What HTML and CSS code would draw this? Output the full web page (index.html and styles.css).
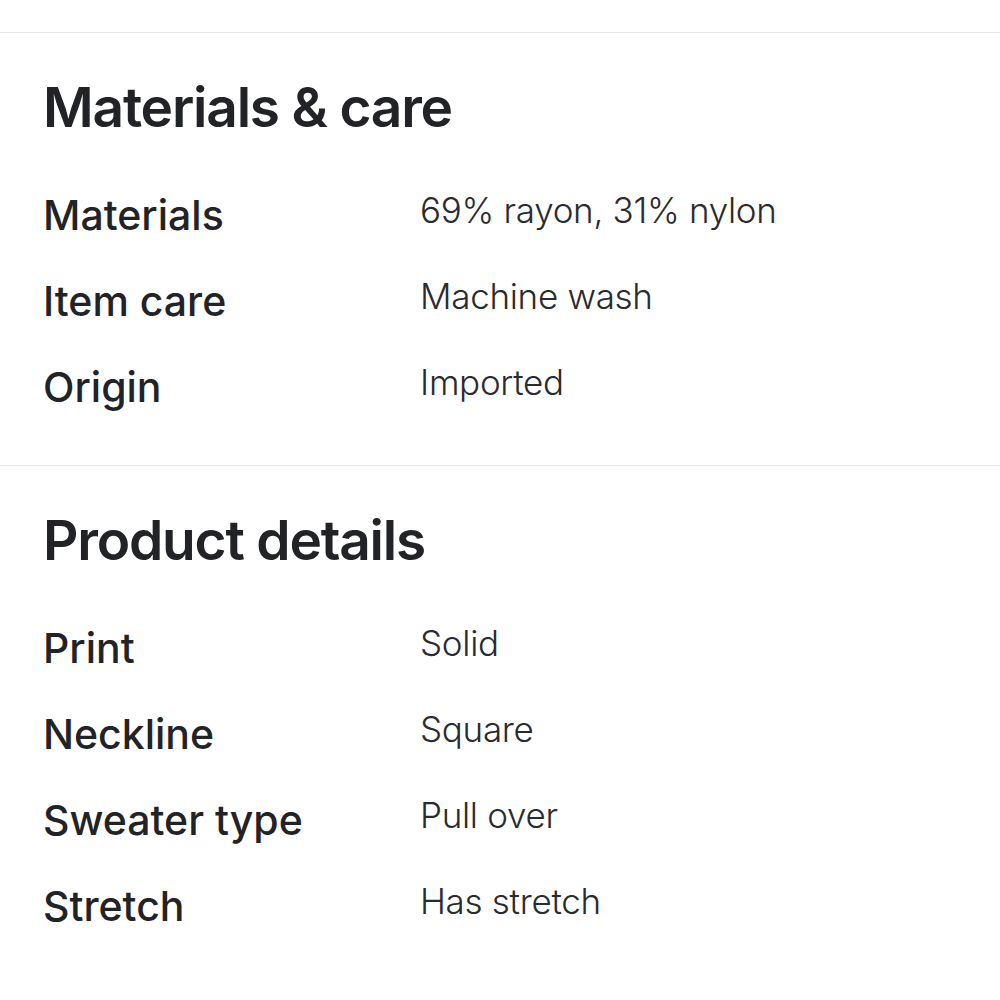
FILE: index.html
```html
<!DOCTYPE html>
<html>
<head>
  <link rel="stylesheet" href="styles.css">
</head>
<body>
  <div class="page">
    <section class="details-section">
      <h2 class="section-title">Materials &amp; care</h2>
      <div class="detail-list">
        <div class="detail-label">Materials</div>
        <div class="detail-value">69% rayon, 31% nylon</div>
        <div class="detail-label">Item care</div>
        <div class="detail-value">Machine wash</div>
        <div class="detail-label">Origin</div>
        <div class="detail-value">Imported</div>
      </div>
    </section>

    <section class="details-section">
      <h2 class="section-title">Product details</h2>
      <div class="detail-list">
        <div class="detail-label">Print</div>
        <div class="detail-value">Solid</div>
        <div class="detail-label">Neckline</div>
        <div class="detail-value">Square</div>
        <div class="detail-label">Sweater type</div>
        <div class="detail-value">Pull over</div>
        <div class="detail-label">Stretch</div>
        <div class="detail-value">Has stretch</div>
      </div>
    </section>
  </div>
</body>
</html>
```

FILE: styles.css
```css
* {
  box-sizing: border-box;
}

body {
  margin: 0;
  background: #fff;
  font-family: Inter, "Noto Sans", sans-serif;
  color: #222326;
}

.page {
  padding-top: 32px;
}

.details-section {
  border-top: 1px solid #e8e8e8;
  padding: 41px 43px 35px;
}

.section-title {
  margin: 0 0 32px;
  font-size: 55px;
  line-height: 66px;
  font-weight: 600;
  letter-spacing: -1.2px;
  color: #222326;
}

.detail-list {
  display: grid;
  grid-template-columns: 377px 1fr;
  align-items: start;
}

.detail-label {
  font-size: 41px;
  line-height: 86px;
  font-weight: 500;
  color: #222326;
}

.detail-value {
  font-size: 35px;
  line-height: 76px;
  font-weight: 300;
  letter-spacing: -0.3px;
  color: #2a2b2e;
}
```
